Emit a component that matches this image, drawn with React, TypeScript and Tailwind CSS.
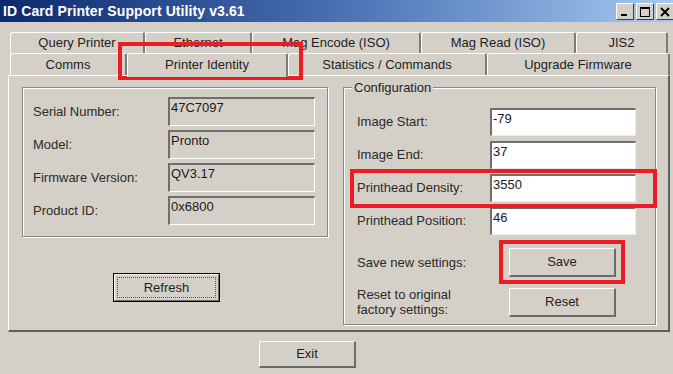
import React from 'react';

const raised =
  'border-t border-l border-t-white border-l-white border-r-2 border-b-2 border-r-[#6b6b6b] border-b-[#6b6b6b]';

function Tab({ label, className, selected }: { label: string; className: string; selected?: boolean }) {
  return (
    <div
      className={`${className} ${
        selected ? 'relative z-10 -mb-[2px] h-[24px] pb-[2px]' : 'h-full'
      } flex items-center justify-center rounded-t-[3px] border-t border-l border-t-white border-l-white border-r-2 border-r-[#7a7a7a] bg-[#d4d0c8] text-[13px] text-[#1e1e1e]`}
    >
      {label}
    </div>
  );
}

function ReadField({ value }: { value: string }) {
  return (
    <div className="h-[29px] w-[147px] border-t-2 border-l-2 border-t-[#6e6e6e] border-l-[#6e6e6e] border-r border-b border-r-white border-b-white bg-[#d4d0c8] pl-[1px] text-[13px] leading-[18px] text-[#1a1a1a]">
      {value}
    </div>
  );
}

function InputField({ value }: { value: string }) {
  return (
    <div className="h-[28px] w-[146px] border-t-2 border-l-2 border-t-[#6e6e6e] border-l-[#6e6e6e] border-r border-b border-r-[#ececec] border-b-[#ececec] bg-white pl-[1px] text-[13px] leading-[18px] text-[#1a1a1a]">
      {value}
    </div>
  );
}

function Button({ label, className }: { label: string; className: string }) {
  return (
    <div className={`${className} ${raised} flex items-center justify-center bg-[#d4d0c8] text-[13px] text-[#1e1e1e]`}>
      {label}
    </div>
  );
}

function TitleButton({ children }: { children: React.ReactNode }) {
  return (
    <div className="flex h-[17px] w-[18px] items-center justify-center border-t border-l border-t-white border-l-white border-r border-b border-r-[#404040] border-b-[#404040] bg-[#d4d0c8]">
      {children}
    </div>
  );
}

export default function App() {
  const identity = [
    { label: 'Serial Number:', value: '47C7097' },
    { label: 'Model:', value: 'Pronto' },
    { label: 'Firmware Version:', value: 'QV3.17' },
    { label: 'Product ID:', value: '0x6800' },
  ];

  const config = [
    { label: 'Image Start:', value: '-79' },
    { label: 'Image End:', value: '37' },
    { label: 'Printhead Density:', value: '3550' },
    { label: 'Printhead Position:', value: '46' },
  ];

  return (
    <div className="relative h-[374px] w-[673px] overflow-hidden bg-[#d4d0c8] font-['Liberation_Sans',Arial,sans-serif]">
      {/* title bar */}
      <div className="flex h-[22px] items-center bg-linear-to-r from-[#0c2a6e] via-[#4a6fb4] to-[#a6caf0] pl-[3px]">
        <span className="text-[14px] font-bold tracking-[0.1px] text-white">ID Card Printer Support Utility v3.61</span>
        <div className="ml-auto mr-[-1px] flex gap-[2px] self-start pt-[3px]">
          <TitleButton>
            <svg width="10" height="10" viewBox="0 0 10 10">
              <rect x="1" y="7" width="6" height="2" fill="#000" />
            </svg>
          </TitleButton>
          <TitleButton>
            <svg width="10" height="10" viewBox="0 0 10 10">
              <rect x="0.5" y="0.5" width="9" height="9" fill="none" stroke="#000" />
              <rect x="0" y="0" width="10" height="2" fill="#000" />
            </svg>
          </TitleButton>
          <TitleButton>
            <svg width="10" height="10" viewBox="0 0 10 10">
              <path d="M1 1L9 9M9 1L1 9" stroke="#000" strokeWidth="1.8" />
            </svg>
          </TitleButton>
        </div>
      </div>

      {/* tabs */}
      <div className="mt-[10px] pl-[10px]">
        <div className="flex h-[21px]">
          <Tab label="Query Printer" className="w-[135px]" />
          <Tab label="Ethernet" className="w-[107px]" />
          <Tab label="Mag Encode (ISO)" className="w-[169px]" />
          <Tab label="Mag Read (ISO)" className="w-[155px]" />
          <Tab label="JIS2" className="w-[92px]" />
        </div>
        <div className="flex h-[22px] items-end">
          <Tab label="Comms" className="w-[117px]" />
          <Tab label="Printer Identity" className="w-[161px]" selected />
          <Tab label="Statistics / Commands" className="w-[199px]" />
          <Tab label="Upgrade Firmware" className="w-[183px]" />
        </div>
      </div>

      {/* tab panel */}
      <div className="ml-[8px] flex h-[257px] w-[662px] gap-[15px] border-t border-l border-t-white border-l-white border-r-2 border-b-2 border-r-[#5e5e5e] border-b-[#5e5e5e] pt-[11px] pl-[13px]">
        <div className="flex flex-col">
          <div className="flex h-[150px] w-[306px] flex-col gap-[4px] border border-[#8a8884] pt-[9px] pl-[10px] shadow-[1px_1px_0_#fff,inset_1px_1px_0_#fff]">
            {identity.map((row) => (
              <div key={row.label} className="flex items-center">
                <span className="w-[135px] text-[13px] text-[#2a2a2a]">{row.label}</span>
                <ReadField value={row.value} />
              </div>
            ))}
          </div>
          <div className="ml-[91px] mt-[36px] h-[29px] w-[107px] border border-black">
            <div className="flex h-full w-full items-center justify-center border-t border-l border-t-white border-l-white border-r border-b border-r-[#6b6b6b] border-b-[#6b6b6b] p-[2px]">
              <div className="flex h-full w-full items-center justify-center border border-dotted border-[#555] text-[13px] text-[#1e1e1e]">
                Refresh
              </div>
            </div>
          </div>
        </div>

        <div className="relative h-[238px] w-[313px] border border-[#8a8884] pt-[20px] pl-[13px] shadow-[1px_1px_0_#fff,inset_1px_1px_0_#fff]">
          <span className="absolute -top-[8px] left-[8px] bg-[#d4d0c8] px-[2px] text-[13px] leading-[15px] text-[#1e1e1e]">
            Configuration
          </span>
          <div className="flex flex-col gap-[5px]">
            {config.map((row) => (
              <div key={row.label} className="flex items-center">
                <span className="w-[133px] text-[13px] text-[#2a2a2a]">{row.label}</span>
                <InputField value={row.value} />
              </div>
            ))}
          </div>
          <div className="mt-[13px] flex items-center">
            <span className="w-[152px] text-[13px] text-[#2a2a2a]">Save new settings:</span>
            <Button label="Save" className="h-[29px] w-[107px]" />
          </div>
          <div className="mt-[10px] flex items-center">
            <span className="w-[152px] text-[13px] leading-[15px] text-[#2a2a2a]">
              Reset to original
              <br />
              factory settings:
            </span>
            <Button label="Reset" className="h-[29px] w-[107px]" />
          </div>
        </div>
      </div>

      <Button label="Exit" className="ml-[259px] mt-[9px] h-[27px] w-[97px]" />

      {/* red highlight boxes */}
      <div className="absolute left-[118px] top-[42px] h-[38px] w-[185px] border-4 border-[#ec1c24]" />
      <div className="absolute left-[350px] top-[169px] h-[39px] w-[307px] border-4 border-[#ec1c24]" />
      <div className="absolute left-[499px] top-[240px] h-[44px] w-[126px] border-4 border-[#ec1c24]" />
    </div>
  );
}
